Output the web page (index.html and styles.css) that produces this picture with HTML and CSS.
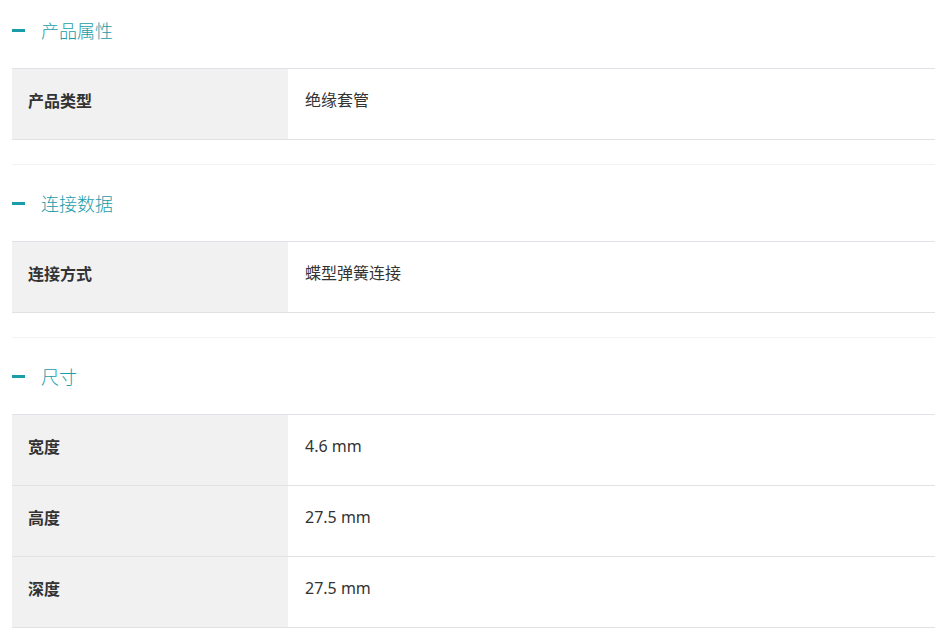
FILE: index.html
```html
<!DOCTYPE html>
<html lang="zh-CN">
<head>
<meta charset="utf-8">
<link rel="stylesheet" href="styles.css">
</head>
<body>
<div class="page">
  <section class="group first">
    <h2 class="group-title"><span class="dash"></span><span>产品属性</span></h2>
    <div class="table">
      <div class="row"><div class="label">产品类型</div><div class="value">绝缘套管</div></div>
    </div>
  </section>
  <section class="group">
    <h2 class="group-title"><span class="dash"></span><span>连接数据</span></h2>
    <div class="table">
      <div class="row"><div class="label">连接方式</div><div class="value">蝶型弹簧连接</div></div>
    </div>
  </section>
  <section class="group">
    <h2 class="group-title"><span class="dash"></span><span>尺寸</span></h2>
    <div class="table">
      <div class="row"><div class="label">宽度</div><div class="value">4.6 mm</div></div>
      <div class="row"><div class="label">高度</div><div class="value">27.5 mm</div></div>
      <div class="row"><div class="label">深度</div><div class="value">27.5 mm</div></div>
    </div>
  </section>
</div>
</body>
</html>
```

FILE: styles.css
```css
html, body {
  margin: 0;
  padding: 0;
  background: #ffffff;
}
body {
  font-family: "Noto Sans", "Noto Sans CJK SC", sans-serif;
  color: #333333;
}
.page {
  padding: 0 9px 0 12px;
}
.group {
  border-top: 1px solid #f3f3f3;
  padding-top: 8px;
  padding-bottom: 24px;
}
.group.first {
  border-top: none;
  padding-top: 0;
}
.group-title {
  display: flex;
  align-items: center;
  box-sizing: border-box;
  height: 68px;
  padding-bottom: 9px;
  margin: 0;
  font-size: 18px;
  font-weight: 300;
  line-height: 1;
  color: #1a9ca9;
  font-family: "Noto Sans CJK SC", sans-serif;
}
.dash {
  display: block;
  width: 13px;
  height: 3px;
  background: #1a9ca9;
  margin-right: 16px;
  margin-top: 2px;
}
.table {
  border-top: 1px solid #e2e1e8;
}
.row {
  display: flex;
  height: 70px;
  border-bottom: 1px solid #e2e2e4;
}
.label {
  width: 276px;
  flex: none;
  box-sizing: border-box;
  background: #f1f1f1;
  padding-left: 16px;
  padding-bottom: 8px;
  display: flex;
  align-items: center;
  line-height: 1;
  font-family: "Noto Sans CJK SC", sans-serif;
  font-weight: 700;
  font-size: 16px;
  color: #333333;
}
.value {
  flex: 1;
  box-sizing: border-box;
  padding-left: 17px;
  padding-bottom: 8px;
  display: flex;
  align-items: center;
  line-height: 1;
  font-size: 16px;
  color: #333333;
}
```
